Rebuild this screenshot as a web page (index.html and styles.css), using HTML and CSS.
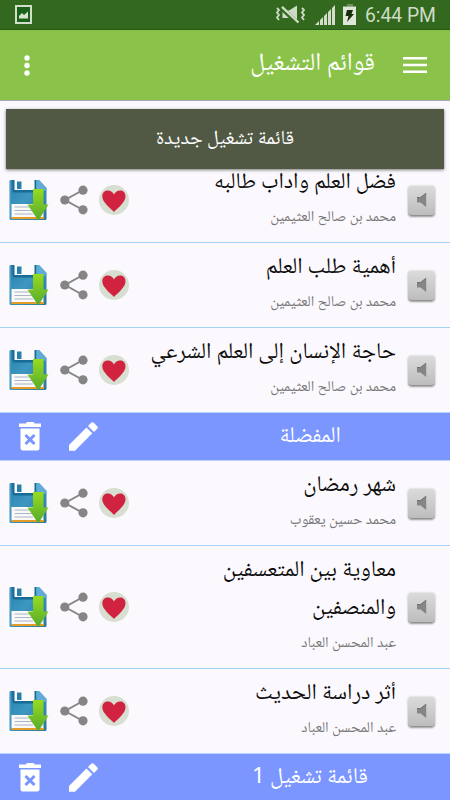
FILE: index.html
```html
<!DOCTYPE html>
<html lang="ar" dir="rtl">
<head>
<meta charset="utf-8">
<title>قوائم التشغيل</title>
<link rel="stylesheet" href="styles.css">
</head>
<body>
<svg class="defs" width="0" height="0" aria-hidden="true">
  <defs>
    <linearGradient id="blue" x1="0" y1="0" x2="1" y2="1"><stop offset="0" stop-color="#2580a8"/><stop offset=".45" stop-color="#3d97c1"/><stop offset="1" stop-color="#2876a0"/></linearGradient>
    <linearGradient id="green" x1="0" y1="0" x2="0" y2="1"><stop offset="0" stop-color="#96dc1d"/><stop offset="1" stop-color="#55a830"/></linearGradient>
    <symbol id="save" viewBox="0 0 40 41">
      <path d="M2 0H30L37.5 8V38.5Q37.5 40 36 40H2Q.5 40 .5 38.5V1.500Q.5 0 2 0Z" fill="url(#blue)"/>
      <path d="M27.500 0H30L37.500 8V11L27.500 9Z" fill="#60acd7"/>
      <path d="M1.500 1V38" stroke="#4a9cc4" fill="none"/>
      <path d="M3.500 0H27V10.500Q27 12.500 25 12.500H5.500Q3.500 12.500 3.500 10.500Z" fill="#176b94"/>
      <path d="M5.500 0H25.500V10H5.500Z" fill="#fbfbfc"/>
      <path d="M8 1.500H12.500V9H8Z" fill="#287fac"/>
      <path d="M2.500 24H34.500V37.500H2.500Z" fill="#fbf9f5"/>
      <path d="M2.500 37H35V39H2.500Z" fill="#e49b27"/>
      <path d="M5.500 27H23M5.500 30.500H23M5.500 34H24" stroke="#a8b5ce" stroke-width="1.200"/>
      <path d="M24 9H34.500V24.500H39.500L29.300 40.500 18.500 24.500H24Z" fill="url(#green)"/>
    </symbol>
    <symbol id="share" viewBox="0 0 28 30">
      <path d="M23 5 5 15 23 25" fill="none" stroke="#858585" stroke-width="2"/>
      <circle cx="23" cy="5.200" r="4.600" fill="#858585"/><circle cx="4.800" cy="15" r="4.600" fill="#858585"/><circle cx="23" cy="24.800" r="4.600" fill="#858585"/>
    </symbol>
    <symbol id="heart" viewBox="0 0 30 30">
      <circle cx="15" cy="15" r="15" fill="#d6dfd1"/>
      <path d="M15 27C12 23.500 3.300 17.500 3.300 11.500C3.300 7.500 6 5.600 8.800 5.600C12 5.600 14 7.300 15 9.600C16 7.300 18 5.600 21.200 5.600C24 5.600 26.500 7.500 26.500 11.500C26.500 17.500 18 23.500 15 27Z" fill="#d1233f"/>
    </symbol>
    <symbol id="speaker" viewBox="0 0 10 14">
      <path d="M0 4.500H3.500L9.200 0V14L3.500 9.500H0Z" fill="#858585"/><path d="M0 4.500H3.500L9.200 0" fill="none" stroke="#707070"/>
    </symbol>
    <symbol id="trash" viewBox="0 0 22 29">
      <path d="M7 1.500Q7 0 8.500 0H14Q15.500 0 15.500 1.500H22V5H0V1.500Z" fill="#fff"/>
      <path d="M1.500 6.500H20.500V26Q20.500 28.500 18 28.500H4Q1.500 28.500 1.500 26Z" fill="#fff"/>
      <path d="M6.500 13 15.500 22M15.500 13 6.500 22" stroke="#7995ff" stroke-width="3"/>
    </symbol>
    <symbol id="pencil" viewBox="0 0 29 29">
      <path d="M0 23 17.500 5.500 23.300 11.300 6 28.700H0Z" fill="#fff"/>
      <path d="M19 4 22.200.8Q23.500-.5 24.800.8L28.200 4.200Q29.500 5.500 28.200 6.800L25 10Z" fill="#fff"/>
    </symbol>
  </defs>
</svg>

<div class="status" dir="ltr">
  <svg class="picture" viewBox="0 0 17 19"><path d="M1 1H16V18H1Z" fill="#1b6218" stroke="#d2dec9" stroke-width="2"/><path d="M4 13.500V11L7 8 9 10 13 6.500V13.500Z" fill="#d9e4d0"/></svg>
  <svg class="mute" viewBox="0 0 29 19"><path d="M6.500 5.500H13L21 .5V17L13 13H6.500Z" fill="#cfdcc5"/><path d="M4.500 2.200 22 18.500" stroke="#32691f" stroke-width="4.500"/><path d="M6 1.800 22.500 17.500" stroke="#cfdcc5" stroke-width="2.400"/><path d="M1 3 3 5 1 7.500 3 10 1 12.500 3 15M26 3 28 5 26 7.500 28 10 26 12.500 28 15" fill="none" stroke="#cfdcc5" stroke-width="1.800"/></svg>
  <svg class="signal" viewBox="0 0 20 20"><path d="M0 20 4 16V20ZM5 15 8 12V20H5ZM9 11 12 8V20H9ZM13 7 16 4V20H13ZM17 3 20 0V20H17Z" fill="#d2dec9"/></svg>
  <svg class="battery" viewBox="0 0 13 21"><path d="M4 0H10V2.500H4Z" fill="#728f62"/><path d="M0 2.500H13V21H0Z" fill="#dfe8d8"/><path d="M4 6H10L8.500 10H11L4 18 5.500 12H2.500Z" fill="#153009"/></svg>
  <span class="clock">6:44 PM</span>
</div>

<header class="bar">
  <svg class="menu" viewBox="0 0 24 16"><path d="M0 1.300H24M0 8H24M0 14.700H24" stroke="#fff" stroke-width="2.500"/></svg>
  <h1>قوائم التشغيل</h1>
  <svg class="dots" viewBox="0 0 6 21"><g fill="#fff"><circle cx="3" cy="3" r="2.700"/><circle cx="3" cy="10.500" r="2.700"/><circle cx="3" cy="18" r="2.700"/></g></svg>
</header>

<div class="new"><span>قائمة تشغيل جديدة</span></div>

<main>
  <div class="row"><i class="play"><svg><use href="#speaker"/></svg></i><div class="text"><p class="title">فضل العلم واداب طالبه</p><p class="author">محمد بن صالح العثيمين</p></div><svg class="heart"><use href="#heart"/></svg><svg class="share"><use href="#share"/></svg><svg class="save"><use href="#save"/></svg></div>
  <div class="row"><i class="play"><svg><use href="#speaker"/></svg></i><div class="text"><p class="title">أهمية طلب العلم</p><p class="author">محمد بن صالح العثيمين</p></div><svg class="heart"><use href="#heart"/></svg><svg class="share"><use href="#share"/></svg><svg class="save"><use href="#save"/></svg></div>
  <div class="row last"><i class="play"><svg><use href="#speaker"/></svg></i><div class="text"><p class="title">حاجة الإنسان إلى العلم الشرعي</p><p class="author">محمد بن صالح العثيمين</p></div><svg class="heart"><use href="#heart"/></svg><svg class="share"><use href="#share"/></svg><svg class="save"><use href="#save"/></svg></div>
  <div class="group"><h2>المفضلة</h2><svg class="pencil"><use href="#pencil"/></svg><svg class="trash"><use href="#trash"/></svg></div>
  <div class="row"><i class="play"><svg><use href="#speaker"/></svg></i><div class="text"><p class="title">شهر رمضان</p><p class="author">محمد حسين يعقوب</p></div><svg class="heart"><use href="#heart"/></svg><svg class="share"><use href="#share"/></svg><svg class="save"><use href="#save"/></svg></div>
  <div class="row tall"><i class="play"><svg><use href="#speaker"/></svg></i><div class="text"><p class="title">معاوية بين المتعسفين<br>والمنصفين</p><p class="author">عبد المحسن العباد</p></div><svg class="heart"><use href="#heart"/></svg><svg class="share"><use href="#share"/></svg><svg class="save"><use href="#save"/></svg></div>
  <div class="row last"><i class="play"><svg><use href="#speaker"/></svg></i><div class="text"><p class="title">أثر دراسة الحديث</p><p class="author">عبد المحسن العباد</p></div><svg class="heart"><use href="#heart"/></svg><svg class="share"><use href="#share"/></svg><svg class="save"><use href="#save"/></svg></div>
  <div class="group"><h2>قائمة تشغيل 1</h2><svg class="pencil"><use href="#pencil"/></svg><svg class="trash"><use href="#trash"/></svg></div>
</main>
</body>
</html>
```

FILE: styles.css
```css
* { box-sizing: border-box; margin: 0; padding: 0; }
body { width: 450px; height: 800px; overflow: hidden; display: flex; flex-direction: column; background: #fcf9fe; font-family: "Noto Naskh Arabic UI", "Noto Naskh Arabic", "Noto Sans Arabic", "Noto Sans", "DejaVu Sans", sans-serif; }
svg { display: block; flex: none; }
.defs { position: absolute; }
.status { height: 30px; flex: none; background: #32691f; border-bottom: 1px solid #28571a; display: flex; align-items: center; padding: 0 14px 0 15px; }
.picture { width: 17px; height: 19px; margin-right: auto; }
.mute { width: 29px; height: 19px; margin-right: 10px; }
.signal { width: 20px; height: 20px; margin-right: 8px; }
.battery { width: 13px; height: 21px; margin-right: 9px; }
.clock { font: 19.3px/30px Roboto, sans-serif; color: #cfdcc5; width: 71px; white-space: nowrap; padding-top: 2px; }
.bar { height: 70px; flex: none; background: #8bc34a; display: flex; align-items: center; padding: 0 23px 0 24px; box-shadow: 0 1px 0 #aea3b3; }
.menu { width: 24px; height: 16px; }
.bar h1 { margin-right: 28px; flex: 1; color: #fff; font-size: 25px; font-weight: 400; line-height: 60px; padding-bottom: 4px; }
.dots { width: 6px; height: 21px; }
.new { position: relative; z-index: 1; height: 60px; flex: none; margin: 9px 6px 0; background: #515945; color: #fff; display: flex; align-items: center; justify-content: center; font-size: 20px; box-shadow: 0 1px 3px #777; }
main { margin-top: -11px; flex: none; }
.row { height: 85px; display: flex; align-items: center; padding: 0 15px 0 9px; border-bottom: 1px solid #a5d2f2; }
.row.last { height: 84px; border-bottom: 0; }
.row.tall { height: 123px; }
.play { width: 27px; height: 31px; border-radius: 4px; background: linear-gradient(#dcdcdc, #bdbdbd); border-bottom: 1px solid #929292; box-shadow: 0 1px 2px #999, inset 0 1px #e8e8e8; display: flex; align-items: center; justify-content: center; flex: none; }
.play svg { width: 10px; height: 14px; margin-left: 1px; }
.text { flex: 1; margin-right: 12px; height: 100%; white-space: nowrap; }
.title { font-size: 22.5px; line-height: 38px; padding-top: 6px; color: #0c0c0c; }
.author { font-size: 15px; line-height: 22px; color: #777; padding-top: 4px; }
.heart { width: 30px; height: 30px; margin-left: 11px; }
.share { width: 28px; height: 30px; margin-left: 11px; }
.save { width: 40px; height: 41px; }
.group { height: 49px; background: #7b96ff; border-top: 1px solid #b5d3fb; border-bottom: 1px solid #b5d3fb; display: flex; align-items: center; padding: 0 13px 0 19px; color: #fff; }
.group h2 { flex: 1; text-align: center; font-size: 22.5px; font-weight: 400; line-height: 46px; padding-left: 85px; }
.pencil { width: 29px; height: 29px; margin-left: 28px; }
.trash { width: 22px; height: 29px; }
```
